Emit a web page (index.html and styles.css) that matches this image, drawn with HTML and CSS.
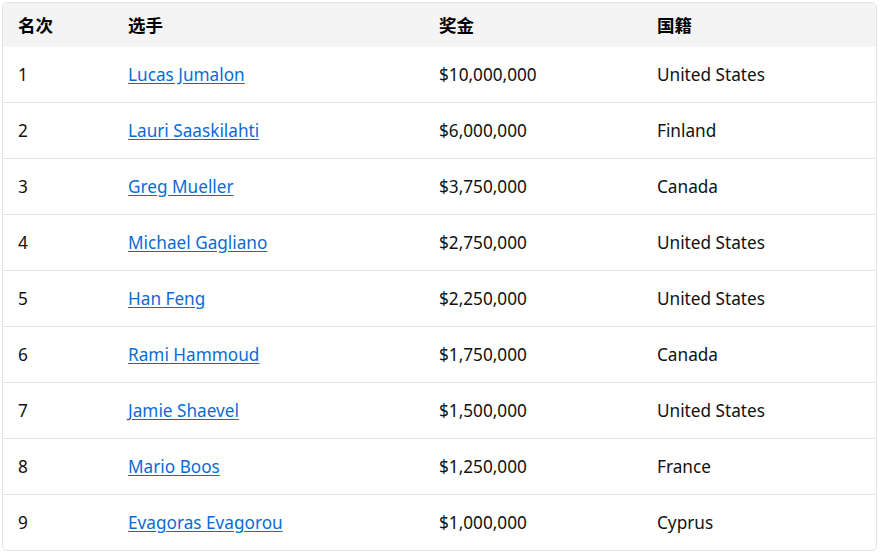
FILE: index.html
```html
<!DOCTYPE html>
<html lang="zh">
<head>
<meta charset="utf-8">
<link rel="stylesheet" href="styles.css">
</head>
<body>
<div class="wrap">
<table class="results">
  <thead>
    <tr><th class="c1">名次</th><th class="c2">选手</th><th class="c3">奖金</th><th class="c4">国籍</th></tr>
  </thead>
  <tbody>
    <tr><td>1</td><td><a href="#">Lucas Jumalon</a></td><td>$10,000,000</td><td>United States</td></tr>
    <tr><td>2</td><td><a href="#">Lauri Saaskilahti</a></td><td>$6,000,000</td><td>Finland</td></tr>
    <tr><td>3</td><td><a href="#">Greg Mueller</a></td><td>$3,750,000</td><td>Canada</td></tr>
    <tr><td>4</td><td><a href="#">Michael Gagliano</a></td><td>$2,750,000</td><td>United States</td></tr>
    <tr><td>5</td><td><a href="#">Han Feng</a></td><td>$2,250,000</td><td>United States</td></tr>
    <tr><td>6</td><td><a href="#">Rami Hammoud</a></td><td>$1,750,000</td><td>Canada</td></tr>
    <tr><td>7</td><td><a href="#">Jamie Shaevel</a></td><td>$1,500,000</td><td>United States</td></tr>
    <tr><td>8</td><td><a href="#">Mario Boos</a></td><td>$1,250,000</td><td>France</td></tr>
    <tr><td>9</td><td><a href="#">Evagoras Evagorou</a></td><td>$1,000,000</td><td>Cyprus</td></tr>
  </tbody>
</table>
</div>
</body>
</html>
```
FILE: styles.css
```css
html, body { margin: 0; padding: 0; background: #fff; }
body { padding: 2px 3px 0 2px; font-family: "Noto Sans", "Noto Sans CJK SC", sans-serif; color: #111; }
.wrap {
  border: 1px solid #e3e3e3;
  border-radius: 5px;
  overflow: hidden;
  width: 873px;
}
.results {
  width: 100%;
  border-collapse: collapse;
  table-layout: fixed;
  font-size: 17.2px;
}
.results th {
  background: #f4f4f4;
  text-align: left;
  font-weight: 700;
  font-family: "Noto Sans CJK SC", "Noto Sans", sans-serif;
  font-size: 17.5px;
  height: 42px;
  padding: 0 0 2px 15px;
  color: #000;
}
.c1 { width: 95px; }
.c2 { width: 296px; }
.c3 { width: 203px; }
.results td {
  height: 54px;
  padding: 0 0 1px 15px;
  border-top: 1px solid #e6e6e6;
  vertical-align: middle;
}
.results tbody tr:first-child td { border-top: none; }
.results a { color: #0b6bd3; text-decoration: underline; text-underline-offset: 2px; }
```
